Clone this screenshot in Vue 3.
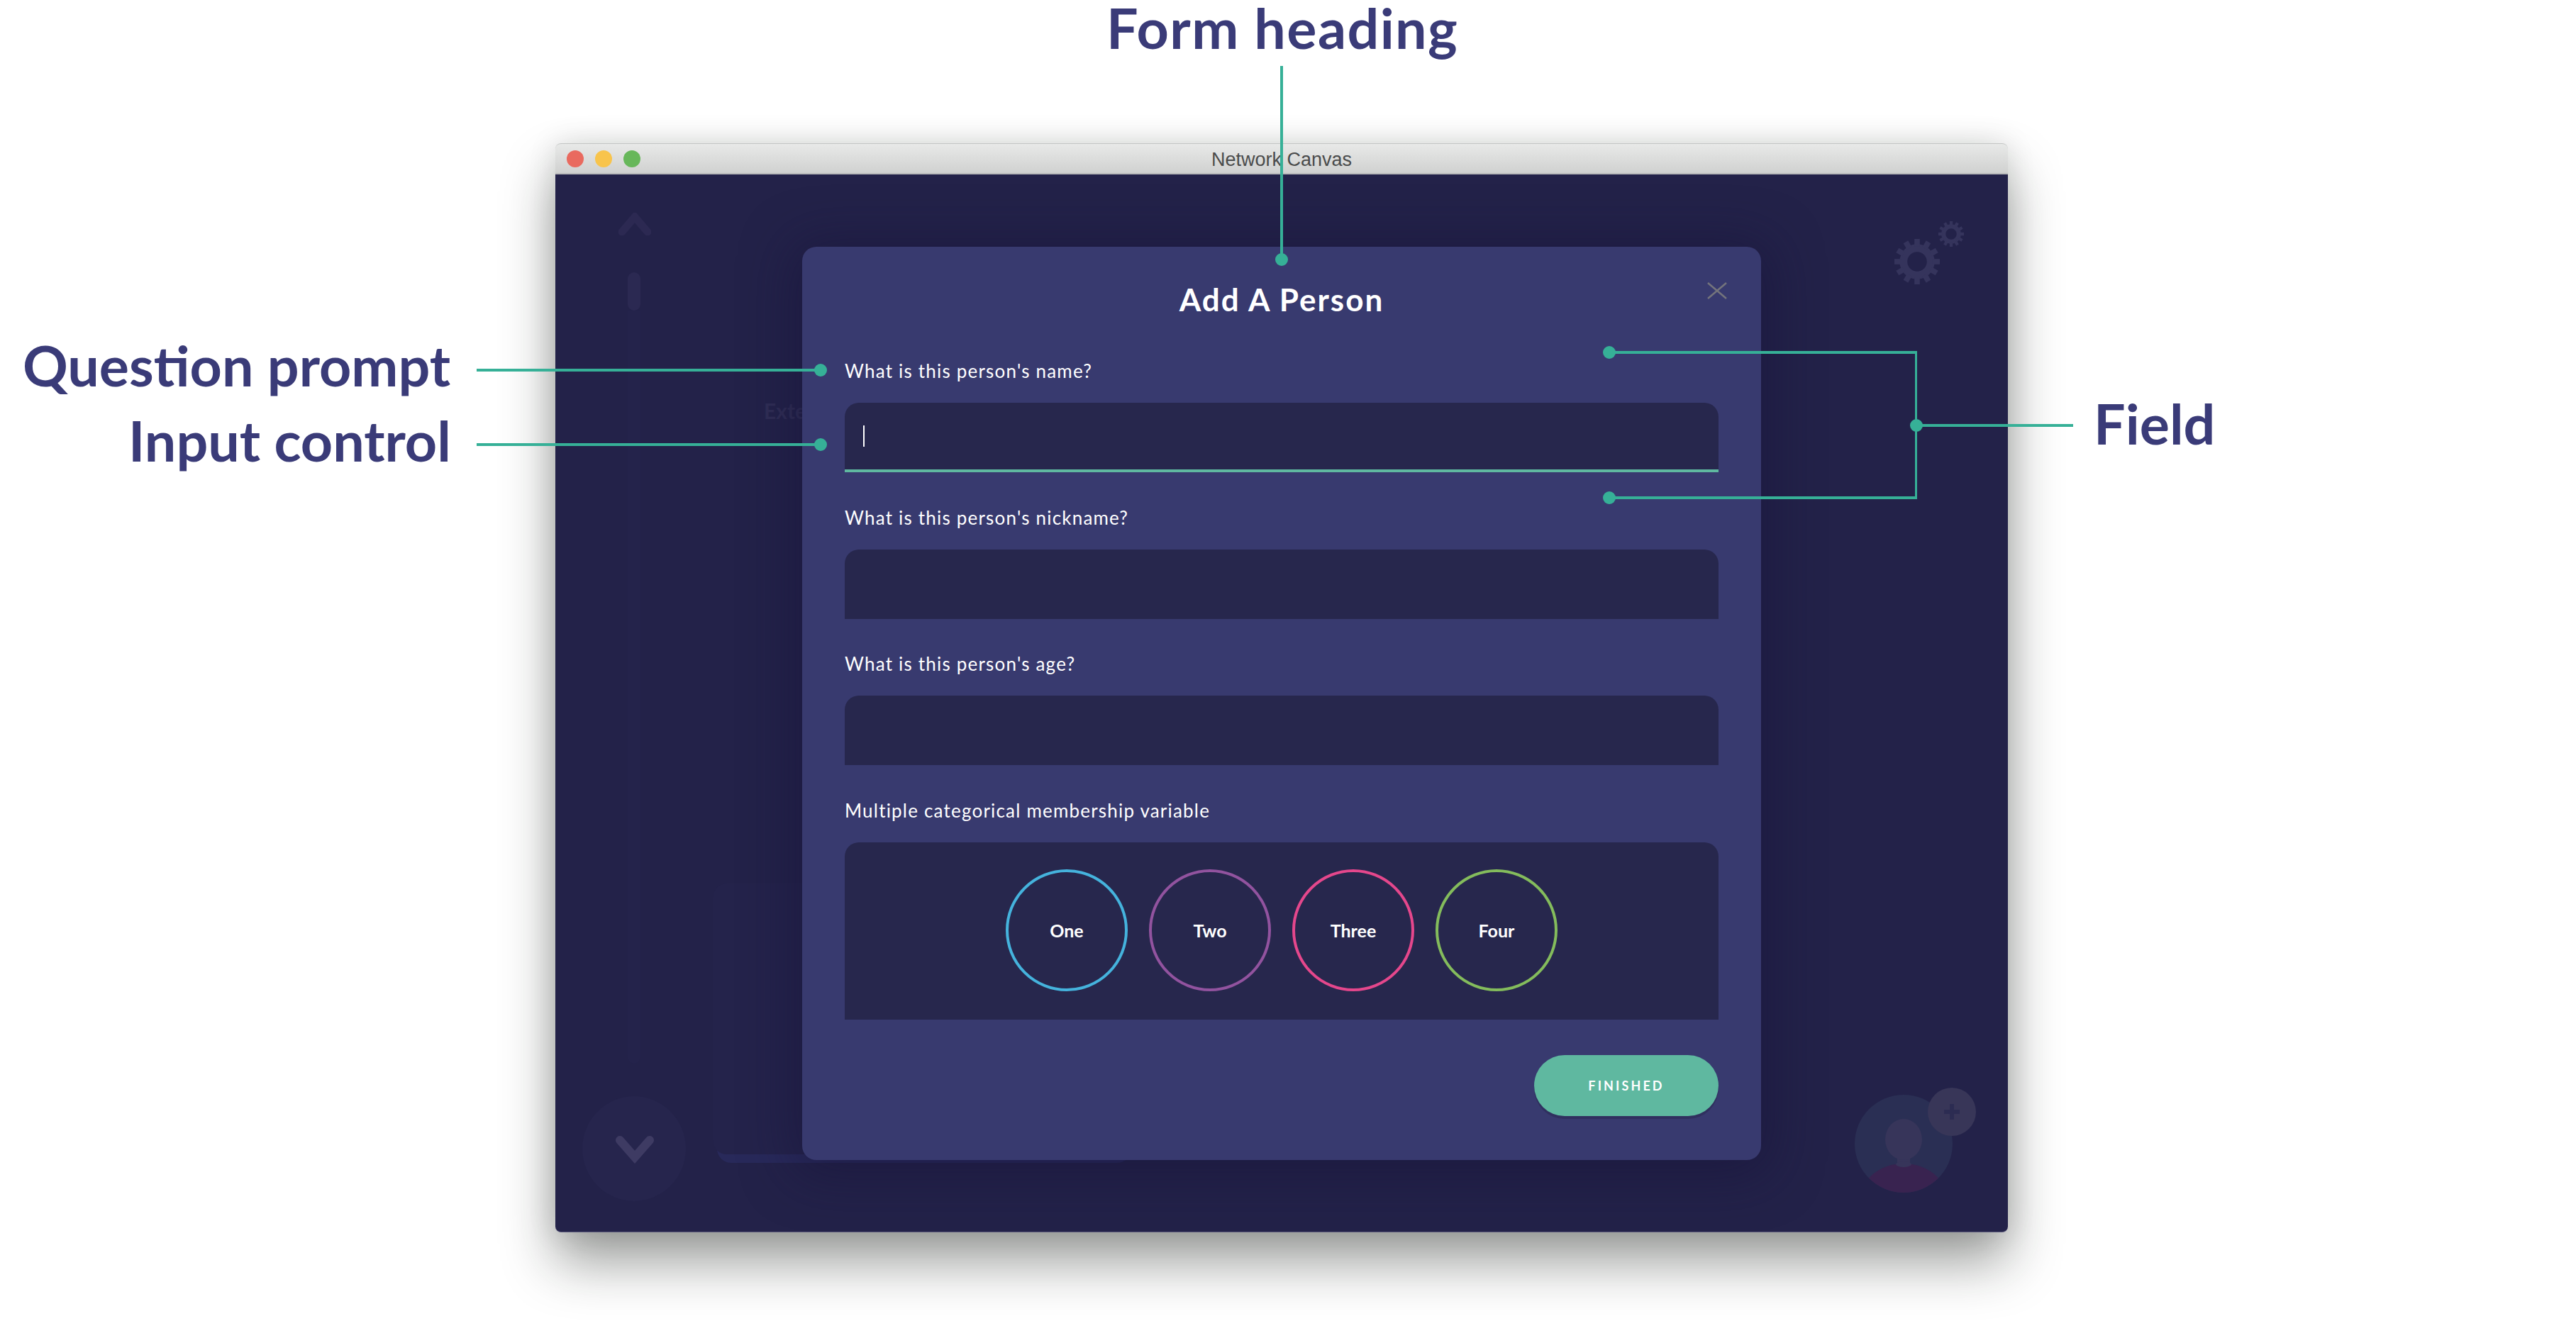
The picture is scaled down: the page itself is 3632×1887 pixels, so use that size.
<template>
  <div class="page">
    <div class="window">
      <div class="titlebar">
        <div class="lights">
          <span class="light red"></span>
          <span class="light yellow"></span>
          <span class="light green"></span>
        </div>
        <span class="window-title">Network Canvas</span>
      </div>

      <div class="stage">
        <svg class="chevron up" viewBox="0 0 46 32"><path d="M5 27 L23 6 L41 27" /></svg>
        <div class="scroll-pill"></div>
        <div class="scroll-track"></div>
        <div class="down-btn">
          <svg class="chevron down" viewBox="0 0 58 40"><path d="M8 7 L29 31 L50 7" /></svg>
        </div>
        <span class="ghost-text">Exte</span>
        <div class="back-card"></div>

        <svg class="gear big" viewBox="-50 -50 100 100">
          <circle r="30" class="gear-ring" />
          <rect v-for="a in teeth" :key="a" x="-6" y="-50" width="12" height="16" :transform="`rotate(${a})`" class="gear-tooth" />
        </svg>
        <svg class="gear small" viewBox="-50 -50 100 100">
          <circle r="30" class="gear-ring" />
          <rect v-for="a in teeth" :key="a" x="-6" y="-50" width="12" height="16" :transform="`rotate(${a})`" class="gear-tooth" />
        </svg>

        <div class="person">
          <svg viewBox="0 0 138 138">
            <defs><clipPath id="person-clip"><circle cx="69" cy="69" r="69" /></clipPath></defs>
            <circle cx="69" cy="69" r="69" fill="#2a2f54" />
            <g clip-path="url(#person-clip)">
              <rect x="60" y="84" width="18" height="26" fill="#37355a" />
              <ellipse cx="69" cy="63" rx="26" ry="29" fill="#37355a" />
              <ellipse cx="69" cy="146" rx="60" ry="49" fill="#392350" />
              <ellipse cx="69" cy="98" rx="11" ry="4" fill="#37355a" />
            </g>
          </svg>
        </div>
        <div class="add-badge">
          <svg viewBox="0 0 24 24"><path d="M12 1 V23 M1 12 H23" /></svg>
        </div>

        <div class="modal">
          <svg class="close" viewBox="0 0 28 24"><path d="M1 1 L27 23 M27 1 L1 23" /></svg>
          <h1 class="modal-title">Add A Person</h1>

          <div class="fields">
            <div class="field">
              <label class="prompt">What is this person's name?</label>
              <div class="control focused"><span class="caret"></span></div>
            </div>
            <div class="field">
              <label class="prompt">What is this person's nickname?</label>
              <div class="control"></div>
            </div>
            <div class="field">
              <label class="prompt">What is this person's age?</label>
              <div class="control"></div>
            </div>
            <div class="field">
              <label class="prompt">Multiple categorical membership variable</label>
              <div class="control options">
                <div
                  v-for="opt in options"
                  :key="opt.label"
                  class="option"
                  :style="{ borderColor: opt.color }"
                >{{ opt.label }}</div>
              </div>
            </div>
          </div>

          <div class="actions">
            <button class="finish">FINISHED</button>
          </div>
        </div>
      </div>
    </div>

    <!-- callouts laid over the screenshot -->
    <div class="note note-heading">Form heading</div>
    <div class="note note-prompt">Question prompt</div>
    <div class="note note-input">Input control</div>
    <div class="note note-field">Field</div>

    <div
      v-for="(l, i) in lines"
      :key="i"
      class="line"
      :style="{ left: l.x + 'px', top: l.y + 'px', width: l.w + 'px', height: l.h + 'px' }"
    ></div>
    <div
      v-for="(d, i) in dots"
      :key="'d' + i"
      class="dot"
      :style="{ left: d.x - 9 + 'px', top: d.y - 9 + 'px' }"
    ></div>
  </div>
</template>

<script setup>
const options = [
  { label: 'One', color: '#45b3dd' },
  { label: 'Two', color: '#92539f' },
  { label: 'Three', color: '#e5478c' },
  { label: 'Four', color: '#84bc5c' }
]

const teeth = Array.from({ length: 12 }, (_, i) => i * 30)

const lines = [
  { x: 1805, y: 93, w: 4, h: 272 },
  { x: 672, y: 520, w: 485, h: 4 },
  { x: 672, y: 625, w: 485, h: 4 },
  { x: 2269, y: 495, w: 434, h: 4 },
  { x: 2269, y: 700, w: 434, h: 4 },
  { x: 2700, y: 495, w: 3, h: 209 },
  { x: 2702, y: 598, w: 221, h: 4 }
]

const dots = [
  { x: 1807, y: 366 },
  { x: 1157, y: 522 },
  { x: 1157, y: 627 },
  { x: 2269, y: 497 },
  { x: 2269, y: 702 },
  { x: 2702, y: 600 }
]
</script>

<style>
html,
body {
  margin: 0;
  background: #fff;
}
</style>

<style scoped>
.page {
  position: relative;
  width: 3632px;
  height: 1887px;
  overflow: hidden;
  background: #fff;
  padding: 202px 0 0 783px;
  box-sizing: border-box;
  font-family: Lato, "Open Sans", sans-serif;
}

.window {
  width: 2048px;
  height: 1536px;
  border-radius: 8px;
  box-shadow: 0 42px 75px rgba(20, 25, 20, 0.42), 0 0 40px rgba(20, 25, 20, 0.12);
  display: flex;
  flex-direction: column;
}

.titlebar {
  position: relative;
  height: 44px;
  box-sizing: border-box;
  flex: none;
  display: flex;
  align-items: center;
  justify-content: center;
  background: linear-gradient(#e8e9e8, #d0d1d0);
  border-top: 1px solid #c3c5c4;
  border-bottom: 2px solid #b9babb;
  border-radius: 8px 8px 0 0;
}

.lights {
  position: absolute;
  left: 16px;
  top: 9px;
  display: flex;
  gap: 16px;
}

.light {
  width: 24px;
  height: 24px;
  border-radius: 50%;
}

.red { background: #e96a5f; }
.yellow { background: #f8c44c; }
.green { background: #67b75a; }

.window-title {
  font-family: "Liberation Sans", Arial, sans-serif;
  font-size: 27px;
  padding-top: 4px;
  color: #4b4c4c;
}

.stage {
  position: relative;
  flex: 1;
  background: #232249;
  border-bottom: 1px solid #5c5b7c;
  border-radius: 0 0 8px 8px;
  display: flex;
  justify-content: center;
  align-items: flex-start;
  padding-top: 102px;
  overflow: hidden;
}

.chevron {
  position: absolute;
  fill: none;
  stroke-linecap: round;
  stroke-linejoin: miter;
}

.chevron.up {
  left: 89px;
  top: 54px;
  width: 46px;
  height: 32px;
  stroke: #2c2952;
  stroke-width: 11;
}

.chevron.down {
  left: 45px;
  top: 55px;
  width: 58px;
  height: 40px;
  stroke: #3e3b63;
  stroke-width: 12;
}

.scroll-pill {
  position: absolute;
  left: 102px;
  top: 138px;
  width: 18px;
  height: 54px;
  border-radius: 9px;
  background: #2b2952;
}

.scroll-track {
  position: absolute;
  left: 102px;
  top: 192px;
  width: 18px;
  height: 1062px;
  border-radius: 0 0 9px 9px;
  background: #24234b;
}

.down-btn {
  position: absolute;
  left: 38px;
  top: 1300px;
  width: 146px;
  height: 148px;
  border-radius: 50%;
  background: #26254d;
}

.ghost-text {
  position: absolute;
  left: 294px;
  top: 315px;
  font-size: 30px;
  font-weight: 700;
  color: #302e55;
}

.back-card {
  position: absolute;
  left: 222px;
  top: 1000px;
  width: 584px;
  height: 382px;
  border-radius: 20px;
  background: #24234b;
  box-shadow: 6px 12px 0 #28295a;
}

.gear {
  position: absolute;
}

.gear-ring {
  fill: none;
  stroke: #35345c;
  stroke-width: 17;
}

.gear-tooth {
  fill: #35345c;
}

.gear.big {
  left: 1888px;
  top: 91px;
  width: 64px;
  height: 64px;
}

.gear.small {
  left: 1950px;
  top: 66px;
  width: 36px;
  height: 36px;
}

.person {
  position: absolute;
  left: 1832px;
  top: 1298px;
  width: 138px;
  height: 138px;
}

.person svg {
  display: block;
  width: 100%;
  height: 100%;
}

.add-badge {
  position: absolute;
  left: 1935px;
  top: 1288px;
  width: 68px;
  height: 68px;
  border-radius: 50%;
  background: #383658;
  display: flex;
  align-items: center;
  justify-content: center;
}

.add-badge svg {
  width: 24px;
  height: 24px;
  fill: none;
  stroke: #2c2c52;
  stroke-width: 6;
}

.modal {
  position: relative;
  box-sizing: border-box;
  width: 1352px;
  height: 1288px;
  padding: 46px 60px 0;
  border-radius: 20px;
  background: #383a6f;
  box-shadow: 0 8px 70px 12px rgba(22, 18, 55, 0.5);
  color: #fff;
}

.close {
  position: absolute;
  top: 50px;
  right: 48px;
  width: 28px;
  height: 24px;
  fill: none;
  stroke: #74747c;
  stroke-width: 2.5;
}

.modal-title {
  margin: 0;
  text-align: center;
  font-size: 44px;
  line-height: 56px;
  font-weight: 700;
  letter-spacing: 2px;
}

.fields {
  margin-top: 57px;
  display: flex;
  flex-direction: column;
  gap: 47.67px;
}

.prompt {
  display: block;
  font-size: 26px;
  line-height: 32px;
  letter-spacing: 1.2px;
  margin-bottom: 29px;
}

.control {
  box-sizing: border-box;
  height: 98px;
  border-radius: 20px 20px 0 0;
  background: #27274d;
}

.control.focused {
  border-bottom: 4px solid #5fb8a0;
  padding: 32px 0 0 26px;
}

.caret {
  display: block;
  width: 2px;
  height: 30px;
  background: #fff;
}

.options {
  height: 250px;
  padding-top: 38px;
  display: flex;
  justify-content: center;
  align-items: flex-start;
  gap: 30px;
}

.option {
  box-sizing: border-box;
  width: 172px;
  height: 172px;
  border: 4px solid;
  border-radius: 50%;
  display: flex;
  align-items: center;
  justify-content: center;
  font-size: 25px;
  font-weight: 700;
}

.actions {
  display: flex;
  justify-content: flex-end;
  margin-top: 50px;
}

.finish {
  width: 260px;
  height: 86px;
  border: 0;
  border-radius: 43px;
  background: #5fb8a0;
  box-shadow: 0 4px 0 #30305f;
  color: #fff;
  font-family: inherit;
  font-size: 18px;
  font-weight: 700;
  letter-spacing: 3.1px;
}

.note {
  position: absolute;
  font-size: 79px;
  line-height: 90px;
  font-weight: 700;
  color: #3a3b78;
  white-space: nowrap;
}

.note-heading { left: 1560px; top: 0; line-height: 78px; letter-spacing: 1.4px; }
.note-prompt { left: 32px; top: 470px; }
.note-input { left: 181px; top: 576px; }
.note-field { left: 2952px; top: 552px; }

.line {
  position: absolute;
  background: #36b097;
}

.dot {
  position: absolute;
  width: 18px;
  height: 18px;
  border-radius: 50%;
  background: #36b097;
}
</style>
